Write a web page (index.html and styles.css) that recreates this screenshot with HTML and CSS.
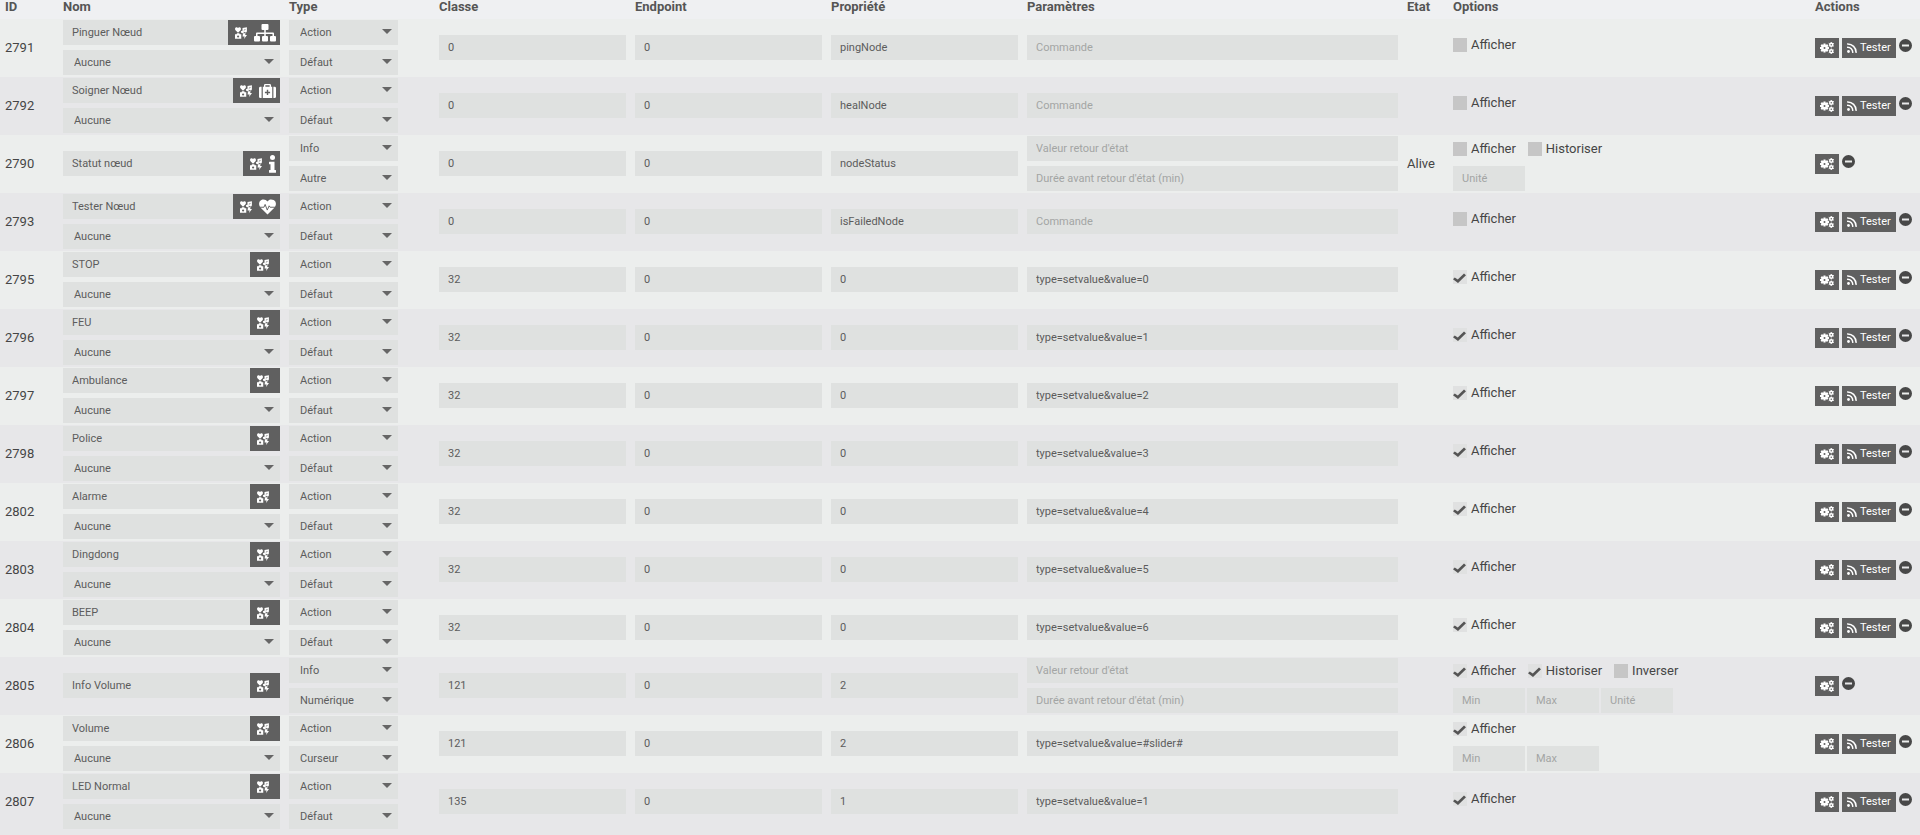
FILE: index.html
```html
<!DOCTYPE html>
<html lang="fr">
<head>
<meta charset="utf-8">
<title>Commandes</title>
<link rel="stylesheet" href="styles.css">
</head>
<body>
<svg class="sprite" aria-hidden="true">
  <symbol id="i-icons" viewBox="0 0 24 24">
    <path d="M6 11.500 1 6.500C-.6 4.300.2 1 2.600.6 4 .4 5.200 1 6 2.200 6.800 1 8 .4 9.400.6c2.400.4 3.200 3.700 1.600 5.900z"/>
    <path d="M15 2 23.800.3v8a3 2.500 0 1 1-2.800-2.500V4.600l-3.200.7v4.500a3 2.500 0 1 1-2.800-2.500z"/>
    <path fill-rule="evenodd" d="M0 14.500h3L4 12.700h4.500l1 1.800h3V23.500H0zm6.200 2.300a2.200 2.200 0 1 0 0 4.400 2.200 2.200 0 0 0 0-4.400z"/>
    <path d="M16 12.500h5.300l-1 3.500H24L18 24l1.200-5h-4z"/>
  </symbol>
  <symbol id="i-sitemap" viewBox="0 0 44 36">
    <rect x="15" y="0" width="14" height="12" rx="2"/>
    <path d="M20.500 11h3v6H38a2 2 0 0 1 2 2v6h-3v-5H23.500v5h-3v-5H7v5H4v-6a2 2 0 0 1 2-2h14.500z"/>
    <rect x="0" y="24" width="12" height="11" rx="2"/><rect x="16" y="24" width="12" height="11" rx="2"/><rect x="32" y="24" width="12" height="11" rx="2"/>
  </symbol>
  <symbol id="i-medkit" viewBox="0 0 36 32">
    <path d="M5.500 7v24H3a3 3 0 0 1-3-3V10a3 3 0 0 1 3-3zM30.500 7v24H33a3 3 0 0 0 3-3V10a3 3 0 0 0-3-3z"/>
    <path fill-rule="evenodd" d="M8 7h2.500V4a3 3 0 0 1 3-3h9a3 3 0 0 1 3 3v3H28v24H8zm5.500 0h9V4h-9zM16.500 13.500v4h-4v3h4v4h3v-4h4v-3h-4v-4z"/>
  </symbol>
  <symbol id="i-info" viewBox="0 0 14 36">
    <circle cx="7" cy="5" r="5"/><path d="M1 13.500h10V30h2a1 1 0 0 1 1 1v3.500a1 1 0 0 1-1 1H1a1 1 0 0 1-1-1V31a1 1 0 0 1 1-1h2V18.500H1a1 1 0 0 1-1-1v-3a1 1 0 0 1 1-1z"/>
  </symbol>
  <symbol id="i-heartbeat" viewBox="0 0 36 32">
    <path d="M18 32 3.500 17.500C-1.500 12-.8 4 5 1.200 10-1 15 .5 18 4.500 21-.5 26-1 31 1.200c5.800 2.800 6.500 10.800 1.500 16.300z"/>
    <path class="cut" d="M1 16.500h9.500l2.500-6 4.500 12 4-9 2 3H35"/>
  </symbol>
  <symbol id="i-cogs" viewBox="0 0 28 24">
    <path class="cog-teeth" d="M9 3v4M9 17v4M0 12h4M14 12h4M2.600 5.600l2.900 2.900M12.500 15.500l2.900 2.900M2.600 18.400l2.900-2.900M12.500 8.500l2.900-2.900"/>
    <circle class="ring" cx="9" cy="12" r="4.500"/>
    <circle class="ring-small" cx="22.500" cy="5.500" r="3"/>
    <circle class="ring-small" cx="22.500" cy="18.500" r="3"/>
    <path class="teeth-small" d="M22.500 0v2M22.500 9V11M17.500 2.700l2 1.200M25.500 7.100l2 1.200M17.500 8.300l2-1.200M25.500 3.900l2-1.200M22.500 13v2M22.500 22V24M17.500 15.700l2 1.200M25.500 20.100l2 1.200M17.500 21.300l2-1.200M25.500 16.900l2-1.200"/>
  </symbol>
  <symbol id="i-rss" viewBox="0 0 20 20">
    <circle cx="3" cy="17" r="2.800"/><path class="wave" d="M1.300 8.500A10.200 10.200 0 0 1 11.500 18.700M1.300 1.800a17 17 0 0 1 16.900 16.900"/>
  </symbol>
  <symbol id="i-minus" viewBox="0 0 24 24">
    <path fill-rule="evenodd" d="M12 0a12 12 0 1 0 0 24 12 12 0 0 0 0-24zM5.500 10h13v4h-13z"/>
  </symbol>
  <symbol id="i-check" viewBox="0 0 26 20">
    <path d="M0 12.500 3.500 9 9.500 13 22 1l4 3.500L10 20z"/>
  </symbol>
</svg>
<table class="commands">
  <colgroup>
    <col class="col-id"><col class="col-name"><col class="col-type"><col><col><col>
    <col class="col-params"><col class="col-state"><col class="col-options"><col class="col-actions">
  </colgroup>
  <thead>
    <tr><th>ID</th><th>Nom</th><th>Type</th><th>Classe</th><th>Endpoint</th><th>Propriété</th><th>Paramètres</th><th>Etat</th><th>Options</th><th>Actions</th></tr>
  </thead>
  <tbody id="rows"></tbody>
</table>
<script src="app.js"></script>
</body>
</html>
```
FILE: styles.css
```css
* { box-sizing: border-box; }

body {
  margin: 0;
  background: #e7e7e9;
  color: #454545;
  font: 13px/18px Roboto, "Liberation Sans", sans-serif;
}

input, select, button { font-family: inherit; }

.sprite { display: none; }
.icon { display: block; flex: none; fill: currentColor; }

.commands {
  width: 100%;
  min-width: 1500px;
  table-layout: fixed;
  border-collapse: collapse;
}

.col-id { width: 58px; }
.col-name { width: 226px; }
.col-type { width: 150px; }
.col-params { width: 380px; }
.col-state { width: 46px; }
.col-options { width: 362px; }
.col-actions { width: 110px; }

th {
  height: 19px;
  padding: 0 4px 5px 5px;
  background: #eff0f2;
  color: #555;
  font-weight: 700;
  line-height: 14px;
  text-align: left;
}

td { padding: 1px 4px 2px 5px; vertical-align: middle; }
tbody tr { height: 58px; background: #eceeed; }
tbody tr:nth-child(even) { background: #e7e7e9; }

.stack { display: flex; flex-direction: column; gap: 5px; }

.field {
  display: block;
  width: 100%;
  height: 25px;
  min-width: 0;
  padding: 0 9px;
  border: 0;
  border-radius: 0;
  background: #dfe1e0;
  color: #5c5c5c;
  font-size: 11px;
}
.field::placeholder { color: #a3a5a4; opacity: 1; }

.picker { position: relative; display: block; }
.picker::after {
  content: "";
  position: absolute;
  top: 9px;
  right: 6px;
  width: 10px;
  height: 5px;
  background: #666;
  clip-path: polygon(0 0, 100% 0, 50% 100%);
  pointer-events: none;
}
.picker .field { padding-left: 11px; appearance: none; }
.type { width: 109px; }

.name { display: flex; }
.name-icons {
  display: flex;
  flex: none;
  align-items: center;
  padding-right: 4px;
  background: #606060;
  color: #fff;
}
.choose {
  height: 25px;
  padding: 0 7px;
  border: 0;
  background: none;
  color: inherit;
}
.cut { fill: none; stroke: #606060; stroke-width: 2; }

.options { display: flex; flex-direction: column; gap: 5px; }
.options.bare { padding-bottom: 5px; }
.checks { display: flex; align-items: center; gap: 12px; height: 25px; }
.check { display: flex; align-items: center; gap: 4px; }
.box { position: relative; display: block; width: 14px; height: 14px; }
.box input {
  display: block;
  width: 14px;
  height: 14px;
  margin: 0;
  appearance: none;
  background: #c6c6c6;
}
.box input:checked { background: #e0e1e1; }
.box .icon { position: absolute; top: 3px; left: 0; color: #555; pointer-events: none; }
.limits { display: flex; gap: 2px; }
.limits .field { width: 72px; }

.actions { display: flex; align-items: center; gap: 3px; }
.btn {
  display: flex;
  align-items: center;
  gap: 3px;
  height: 20px;
  padding: 0 5px;
  border: 0;
  background: #606060;
  color: #fff;
  font-size: 11px;
}
.remove {
  padding: 0 0 4px;
  border: 0;
  background: none;
  color: #484848;
}
.cog-teeth { fill: none; stroke: currentColor; stroke-width: 4; }
.ring { fill: none; stroke: currentColor; stroke-width: 5; }
.ring-small { fill: none; stroke: currentColor; stroke-width: 3; }
.teeth-small { fill: none; stroke: currentColor; stroke-width: 2; }
.wave { fill: none; stroke: currentColor; stroke-width: 3; stroke-linecap: round; }
```
FILE: app.js
```js
const commands = [
  { id: 2791, name: "Pinguer Nœud", icon: ["sitemap", 22, 18], cls: "0", prop: "pingNode", params: "" },
  { id: 2792, name: "Soigner Nœud", icon: ["medkit", 17, 16], cls: "0", prop: "healNode", params: "" },
  { id: 2790, name: "Statut nœud", icon: ["info", 7, 18], cls: "0", prop: "nodeStatus", info: true, sub: "Autre", state: "Alive",
    checks: [["Afficher", false], ["Historiser", false]], limits: ["Unité"] },
  { id: 2793, name: "Tester Nœud", icon: ["heartbeat", 17, 16], cls: "0", prop: "isFailedNode", params: "" },
  ...[[2795, "STOP"], [2796, "FEU"], [2797, "Ambulance"], [2798, "Police"], [2802, "Alarme"], [2803, "Dingdong"], [2804, "BEEP"]]
    .map(([id, name], n) => ({ id, name, cls: "32", prop: "0", params: `type=setvalue&value=${n}`, checks: [["Afficher", true]] })),
  { id: 2805, name: "Info Volume", cls: "121", prop: "2", info: true, sub: "Numérique",
    checks: [["Afficher", true], ["Historiser", true], ["Inverser", false]], limits: ["Min", "Max", "Unité"] },
  { id: 2806, name: "Volume", cls: "121", prop: "2", sub: "Curseur", params: "type=setvalue&value=#slider#",
    checks: [["Afficher", true]], limits: ["Min", "Max"] },
  { id: 2807, name: "LED Normal", cls: "135", prop: "1", params: "type=setvalue&value=1", checks: [["Afficher", true]] },
];

const esc = (s) => s.replace(/&/g, "&amp;").replace(/"/g, "&quot;");
const icon = (name, w, h) => `<svg class="icon" width="${w}" height="${h}" aria-hidden="true"><use href="#i-${name}"/></svg>`;
const text = (label, value = "", hint = "") =>
  `<input class="field" type="text" aria-label="${label}" value="${esc(value)}" placeholder="${hint}">`;
const select = (label, value) =>
  `<span class="picker"><select class="field" aria-label="${label}"><option>${value}</option></select></span>`;
const check = ([label, on]) =>
  `<label class="check"><span class="box"><input type="checkbox"${on ? " checked" : ""}>${on ? icon("check", 13, 10) : ""}</span>${label}</label>`;

function row(c) {
  const checks = c.checks || [["Afficher", false]];
  const params = c.info
    ? text("Valeur retour", "", "Valeur retour d'état") + text("Durée", "", "Durée avant retour d'état (min)")
    : text("Paramètres", c.params, "Commande");
  return `<tr>
    <td>${c.id}</td>
    <td><div class="stack"><div class="name">${text("Nom", c.name)}<span class="name-icons"><button class="choose" type="button" aria-label="Icône">${icon("icons", 12, 12)}</button>${c.icon ? icon(...c.icon) : ""}</span></div>${c.info ? "" : select("Valeur", "Aucune")}</div></td>
    <td><div class="stack type">${select("Type", c.info ? "Info" : "Action")}${select("Sous-type", c.sub || "Défaut")}</div></td>
    <td>${text("Classe", c.cls)}</td>
    <td>${text("Endpoint", "0")}</td>
    <td>${text("Propriété", c.prop)}</td>
    <td><div class="stack">${params}</div></td>
    <td>${c.state || ""}</td>
    <td><div class="options${c.limits ? "" : " bare"}"><div class="checks">${checks.map(check).join("")}</div>${c.limits ? `<div class="limits">${c.limits.map((l) => text(l, "", l)).join("")}</div>` : ""}</div></td>
    <td><div class="actions"><button class="btn" type="button" aria-label="Configurer">${icon("cogs", 14, 12)}</button>${c.info ? "" : `<button class="btn" type="button">${icon("rss", 10, 10)}Tester</button>`}<button class="remove" type="button" aria-label="Supprimer">${icon("minus", 13, 13)}</button></div></td>
  </tr>`;
}

document.getElementById("rows").innerHTML = commands.map(row).join("");
```
